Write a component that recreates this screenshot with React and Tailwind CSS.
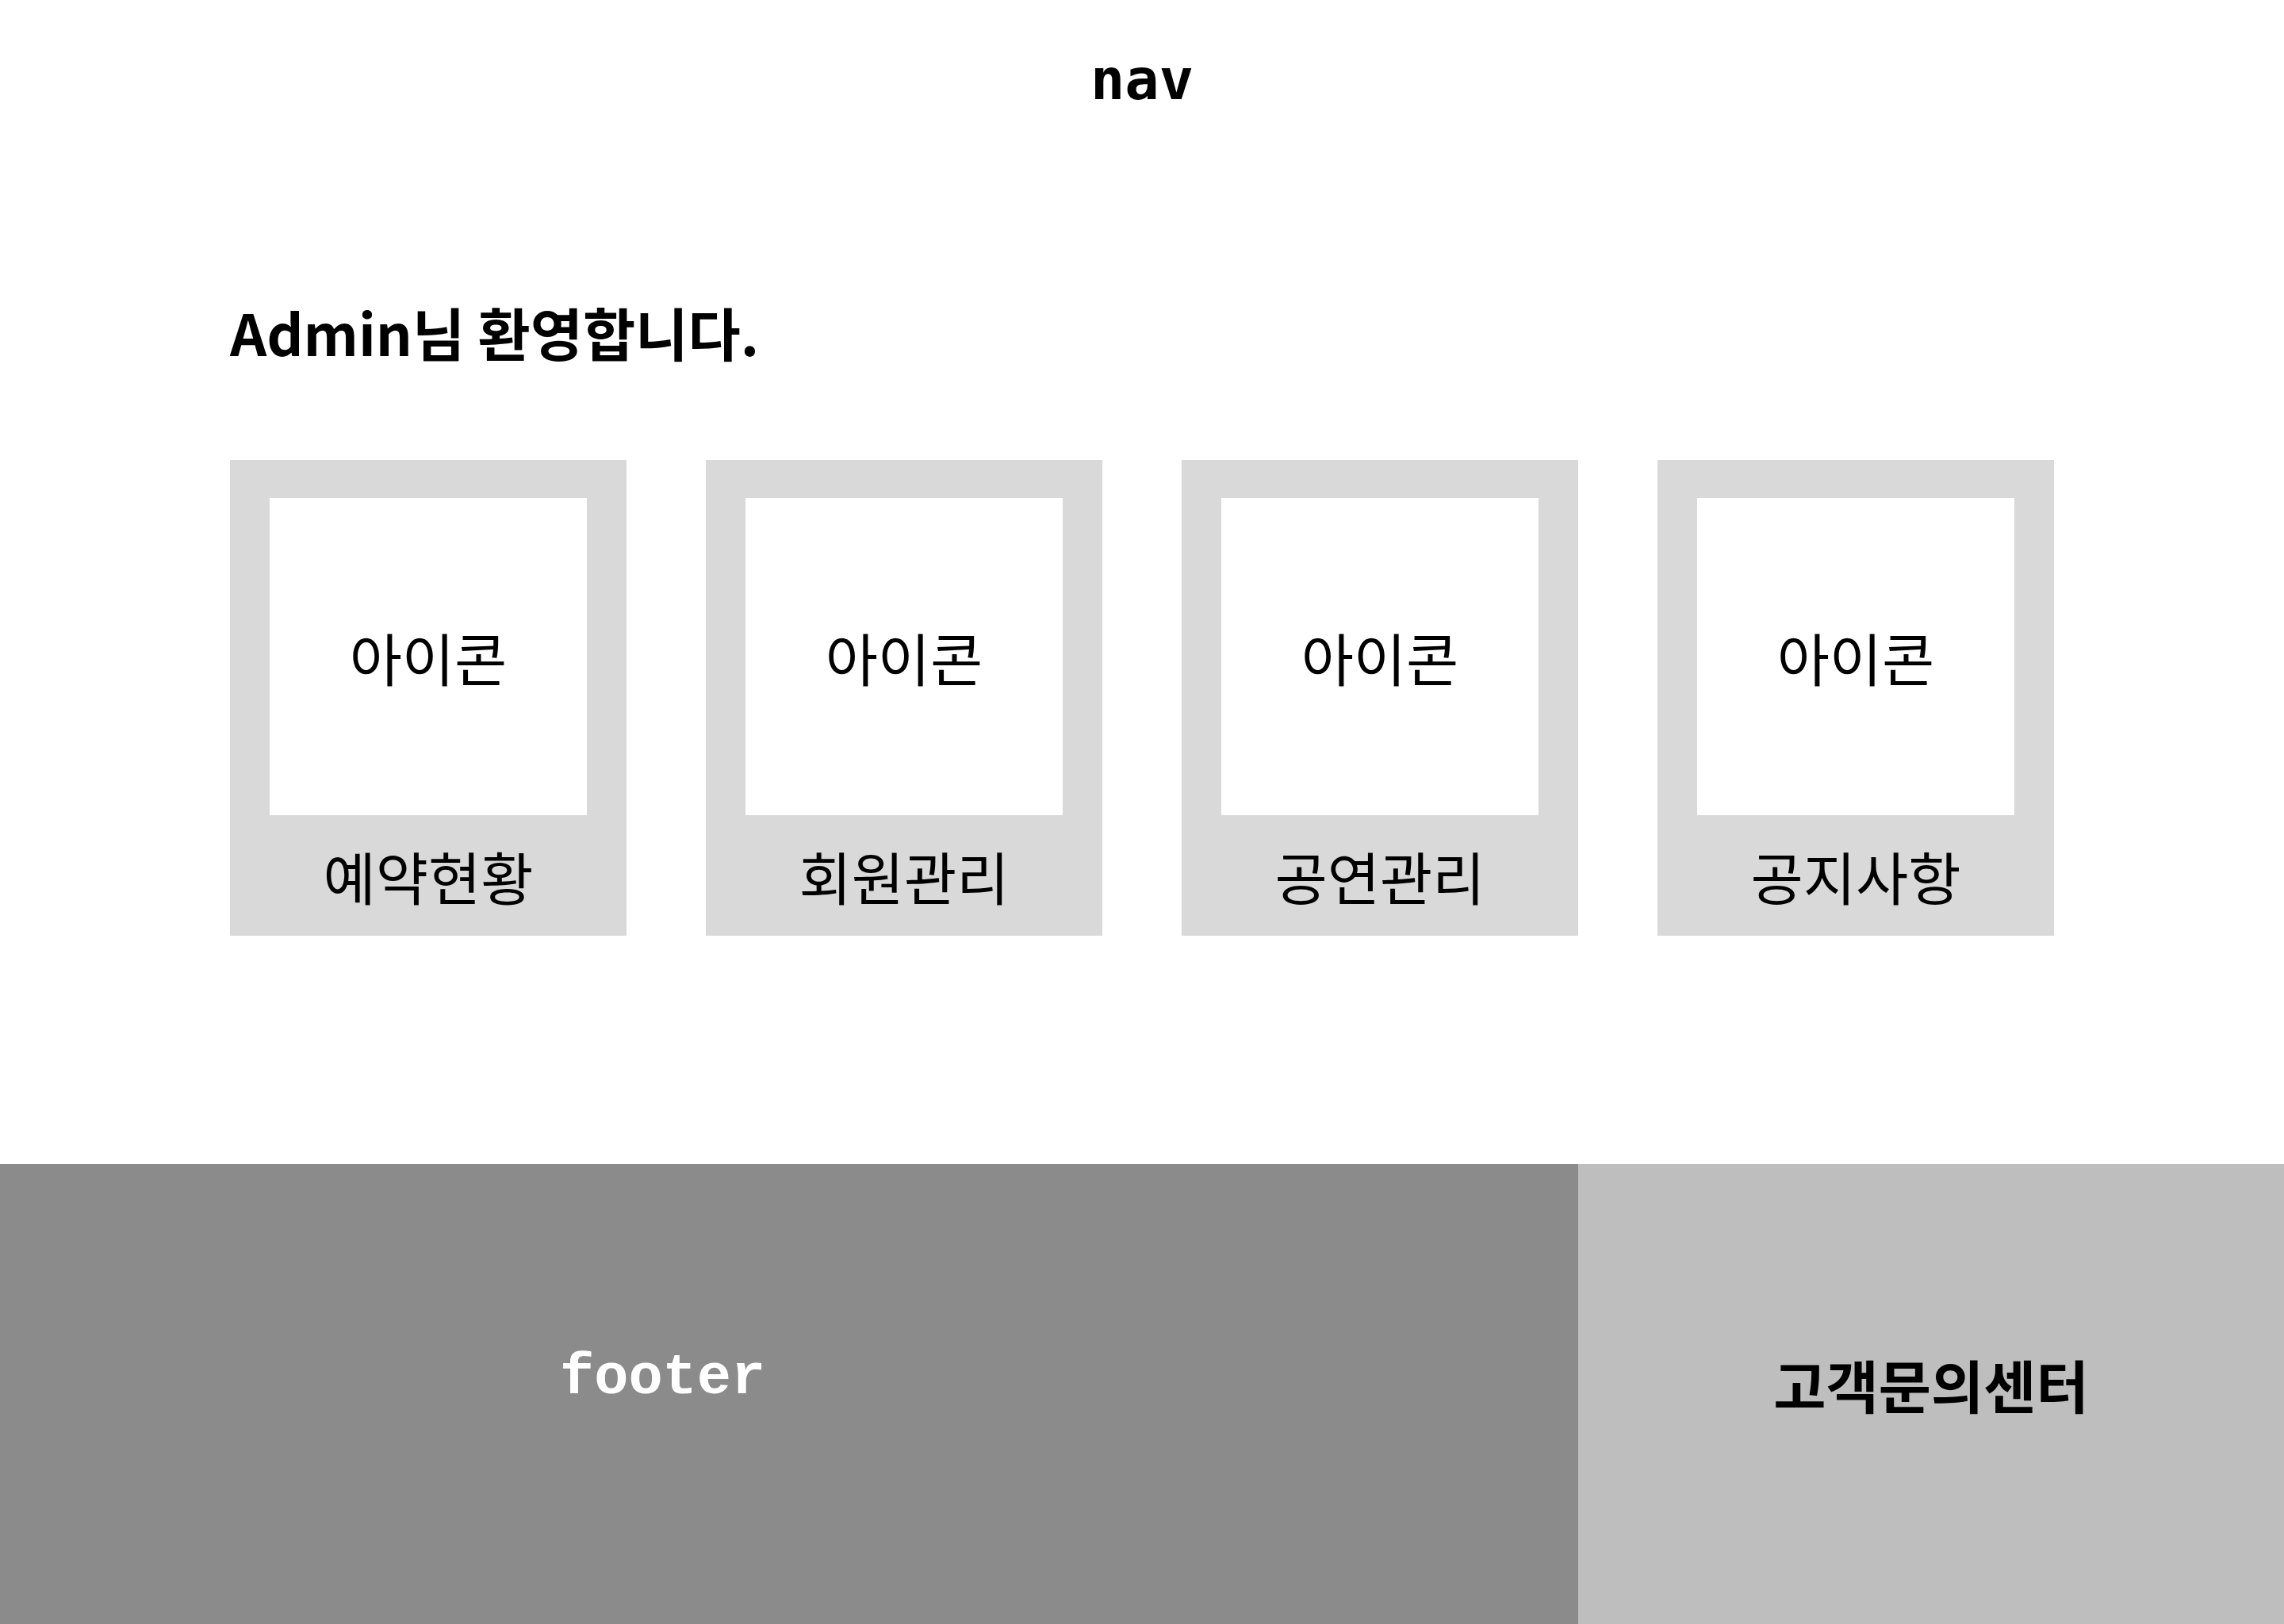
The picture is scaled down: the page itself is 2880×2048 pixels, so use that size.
import React from 'react';

const menus = ['예약현황', '회원관리', '공연관리', '공지사항'];

const MenuCard = ({ label }) => {
  return (
    <div className="flex h-[600px] w-[500px] flex-col items-center bg-[#d9d9d9] pt-[48px]">
      <div className="flex h-[400px] w-[400px] items-center justify-center bg-white text-[72px] text-black">
        아이콘
      </div>
      <div className="flex flex-1 items-center justify-center text-[72px] text-black">
        {label}
      </div>
    </div>
  );
};

const App = () => {
  return (
    <div className="flex min-h-[2048px] w-full flex-col bg-white font-['Noto_Sans_CJK_KR',sans-serif]">
      {/* 상단 네비 */}
      <nav className="flex h-[200px] items-center justify-center">
        <span className="font-['DejaVu_Sans_Mono',monospace] text-[72px] font-bold leading-none text-black">
          nav
        </span>
      </nav>

      <main className="h-[1268px] px-[290px] pt-[182px]">
        <h1 className="text-[72px] font-bold leading-none text-black">Admin님 환영합니다.</h1>

        <div className="mt-[126px] grid grid-cols-4 gap-[100px]">
          {menus.map((m) => (
            <MenuCard key={m} label={m} />
          ))}
        </div>
      </main>

      <footer className="flex h-[580px]">
        <div className="flex w-[1990px] items-center bg-[#8b8b8b] pb-[40px] pl-[706px]">
          <span className="font-['Liberation_Mono',monospace] text-[72px] font-bold leading-none text-white">
            footer
          </span>
        </div>
        <div className="flex flex-1 items-center justify-center bg-[#bebebe] pb-[26px]">
          <span className="text-[72px] font-bold text-black">고객문의센터</span>
        </div>
      </footer>
    </div>
  );
};

export default App;
